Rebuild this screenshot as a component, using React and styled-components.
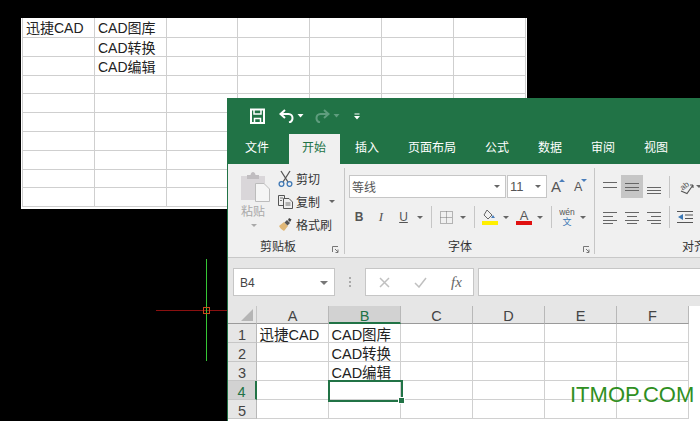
import React from "react";
import styled, { createGlobalStyle } from "styled-components";

const Global = createGlobalStyle`
  html, body { margin: 0; padding: 0; background: #000; }
  body { font-family: "Liberation Sans", "Noto Sans CJK SC", sans-serif; }
`;

const Desktop = styled.div`
  position: relative;
  width: 700px;
  height: 421px;
  background: #000;
  overflow: hidden;
`;

/* ---------- pasted sheet on the CAD canvas ---------- */
const PastedSheet = styled.div`
  position: absolute;
  left: 21px;
  top: 18px;
  width: 506px;
  height: 191px;
  background: #fff;
  box-sizing: border-box;
  padding-left: 1px;
  display: grid;
  grid-template-columns: 73px 72px 71px 72px 72px 72px 72px;
  grid-template-rows: 20px;
  grid-auto-rows: 18.8px;
  align-content: start;
`;
const PastedCell = styled.div`
  box-sizing: border-box;
  border-right: 1px solid #cfcfcf;
  border-bottom: 1px solid #cfcfcf;
  padding-left: 3px;
  font-size: 14px;
  line-height: 21px;
  color: #222;
  white-space: nowrap;
  overflow: hidden;
  &:nth-child(7n + 1) {
    border-left: 1px solid #cfcfcf;
  }
`;

const CrossHair = styled.svg`
  position: absolute;
  left: 150px;
  top: 255px;
`;

/* ---------- excel window ---------- */
const ExcelWindow = styled.div`
  position: absolute;
  left: 227px;
  top: 98px;
  width: 473px;
  height: 323px;
  background: #fff;
  border-left: 1px solid #217346;
  box-sizing: border-box;
  display: flex;
  flex-direction: column;
`;
const TitleBar = styled.div`
  height: 36px;
  flex: none;
  background: #217346;
  display: flex;
  align-items: center;
  padding-left: 22px;
  box-sizing: border-box;
`;
const QuickIcon = styled.svg`
  display: block;
  flex: none;
  margin-right: ${(p) => p.$gap || 0}px;
  margin-left: ${(p) => p.$lead || 0}px;
`;
const TabBar = styled.div`
  height: 30px;
  flex: none;
  background: #217346;
  display: flex;
  gap: 2px;
  white-space: nowrap;
`;
const FileTab = styled.div`
  width: 61px;
  margin-right: -2px;
  padding-left: 17px;
  box-sizing: border-box;
  line-height: 29px;
  font-size: 12px;
  color: #fff;
`;
const Tab = styled.div`
  flex: none;
  width: ${(p) => p.$w || 51}px;
  padding-left: 13px;
  box-sizing: border-box;
  line-height: 29px;
  font-size: 12px;
  color: ${(p) => (p.$active ? "#217346" : "#fff")};
  background: ${(p) => (p.$active ? "#f0f0f0" : "transparent")};
`;

const Ribbon = styled.div`
  height: 94px;
  flex: none;
  background: #f0f0f0;
  border-bottom: 1px solid #c8c8c8;
  box-sizing: border-box;
  display: flex;
  overflow: hidden;
`;
const Group = styled.div`
  position: relative;
  flex: none;
  width: ${(p) => p.$w}px;
  height: 86px;
  margin-top: 4px;
  box-sizing: border-box;
  border-right: ${(p) => (p.$open ? "none" : "1px solid #c6c6c6")};
  display: flex;
  flex-direction: column;
`;
const GroupBody = styled.div`
  flex: 1;
  display: flex;
  padding-left: ${(p) => p.$pl || 0}px;
`;
const GroupLabel = styled.div`
  height: 18px;
  line-height: 22px;
  padding-left: ${(p) => p.$pl}px;
  font-size: 12px;
  color: #333;
  white-space: nowrap;
`;
const Launcher = styled.svg`
  position: absolute;
  right: ${(p) => p.$r}px;
  bottom: 1px;
`;
const PasteButton = styled.div`
  width: 33px;
  margin-left: 13px;
  margin-right: 4px;
  margin-top: 3px;
  display: flex;
  flex-direction: column;
  align-items: flex-start;
  flex: none;
`;
const PasteLabel = styled.div`
  font-size: 12px;
  line-height: 14px;
  color: #a9a9a9;
  margin-top: 3px;
`;
const PasteCaret = styled.div`
  margin-top: 5px;
  margin-left: 10px;
  width: 0;
  height: 0;
  border-left: 3px solid transparent;
  border-right: 3px solid transparent;
  border-top: 3px solid #a9a9a9;
`;
const ClipColumn = styled.div`
  display: flex;
  flex-direction: column;
  gap: 5px;
  padding-top: 1px;
`;
const ClipRow = styled.div`
  display: flex;
  align-items: center;
  gap: 3px;
  height: 18px;
  font-size: 12px;
  color: #333;
  white-space: nowrap;
`;
const Caret = styled.span`
  display: inline-block;
  flex: none;
  width: 0;
  height: 0;
  border-left: 3px solid transparent;
  border-right: 3px solid transparent;
  border-top: 3px solid ${(p) => p.$color || "#666"};
  margin-left: ${(p) => p.$ml || 0}px;
  margin-right: ${(p) => p.$mr || 0}px;
`;
const NameCaret = styled(Caret)`
  border-left-width: 4px;
  border-right-width: 4px;
  border-top-width: 4px;
`;
const FontColumn = styled.div`
  display: flex;
  flex-direction: column;
  padding-top: 7px;
`;
const ToolRow = styled.div`
  display: flex;
  align-items: center;
  height: ${(p) => p.$h}px;
  margin-top: ${(p) => p.$mt || 0}px;
  padding-left: ${(p) => p.$pl || 0}px;
`;
const FontSelect = styled.div`
  box-sizing: border-box;
  width: ${(p) => p.$w}px;
  height: 23px;
  background: #fff;
  border: 1px solid #c6c6c6;
  margin-right: 1px;
  padding: 0 5px 0 2px;
  display: flex;
  align-items: center;
  justify-content: space-between;
  font-size: ${(p) => p.$size || 12}px;
  color: #555;
  flex: none;
`;
const SizeButton = styled.span`
  position: relative;
  flex: none;
  width: 23px;
  margin-left: ${(p) => p.$ml || 0}px;
  font-size: ${(p) => p.$size}px;
  line-height: 24px;
  color: #555;
  &::after {
    content: "";
    position: absolute;
    left: ${(p) => p.$tri}px;
    top: 4px;
    width: 0;
    height: 0;
    border-left: 3px solid transparent;
    border-right: 3px solid transparent;
    ${(p) =>
      p.$down
        ? "border-top: 3px solid #4a7ebb;"
        : "border-bottom: 3px solid #4a7ebb;"}
  }
`;
const GlyphButton = styled.span`
  flex: none;
  width: ${(p) => p.$w}px;
  text-align: center;
  font-family: ${(p) => (p.$serif ? '"Liberation Serif", serif' : "inherit")};
  font-size: ${(p) => p.$size || 12}px;
  font-weight: ${(p) => (p.$bold ? 700 : 400)};
  font-style: ${(p) => (p.$italic ? "italic" : "normal")};
  text-decoration: ${(p) => (p.$under ? "underline" : "none")};
  color: #555;
  line-height: 16px;
`;
const ToolSep = styled.span`
  flex: none;
  width: 1px;
  height: 22px;
  background: #c6c6c6;
  margin-left: ${(p) => p.$ml}px;
  margin-right: ${(p) => p.$mr}px;
`;
const ActiveAlign = styled.div`
  flex: none;
  width: 22px;
  height: 23px;
  margin: 0 4px;
  background: #c6c6c6;
  display: flex;
  align-items: center;
  justify-content: center;
`;
const AlignGap = styled.span`
  flex: none;
  width: 8px;
`;

/* ---------- formula bar ---------- */
const FormulaBar = styled.div`
  height: 48px;
  flex: none;
  background: #e6e6e6;
  box-sizing: border-box;
  padding: 10px 0 10px 5px;
  display: flex;
  align-items: flex-start;
`;
const NameBox = styled.div`
  box-sizing: border-box;
  width: 102px;
  height: 28px;
  background: #fff;
  border: 1px solid #c6c6c6;
  display: flex;
  align-items: center;
  justify-content: space-between;
  padding: 1px 6px 0 6px;
  font-size: 12px;
  color: #444;
`;
const FormulaDots = styled.div`
  width: 30px;
  flex: none;
  height: 28px;
  display: flex;
  align-items: center;
  justify-content: center;
`;
const FormulaButtons = styled.div`
  box-sizing: border-box;
  width: 109px;
  height: 28px;
  background: #fff;
  border: 1px solid #c6c6c6;
  margin-right: 4px;
  flex: none;
  display: flex;
  align-items: center;
  gap: 24px;
  padding-left: 13px;
`;
const FxLabel = styled.span`
  font-family: "Liberation Serif", serif;
  font-style: italic;
  font-size: 15px;
  color: #666;
`;
const FormulaInput = styled.div`
  flex: 1;
  height: 28px;
  box-sizing: border-box;
  background: #fff;
  border: 1px solid #c6c6c6;
  border-right: none;
`;

/* ---------- grid ---------- */
const SheetGrid = styled.div`
  position: relative;
  flex: 1;
  display: grid;
  grid-template-columns: 29px repeat(6, 72px);
  grid-template-rows: 18px repeat(5, 19px);
  align-content: start;
  background: #fff;
  overflow: hidden;
`;
const Corner = styled.div`
  background: #e6e6e6;
  border-right: 1px solid #c6c6c6;
  border-bottom: 1px solid #9a9a9a;
  box-sizing: border-box;
  display: flex;
  align-items: flex-end;
  justify-content: flex-end;
  padding: 0 3px 2px 0;
`;
const ColHead = styled.div`
  box-sizing: border-box;
  background: ${(p) => (p.$active ? "#d2d2d2" : "#e6e6e6")};
  border-right: 1px solid #b8b8b8;
  border-bottom: ${(p) => (p.$active ? "2px solid #217346" : "1px solid #9a9a9a")};
  text-align: center;
  font-size: 14.5px;
  line-height: 21px;
  color: ${(p) => (p.$active ? "#217346" : "#444")};
`;
const RowHead = styled.div`
  box-sizing: border-box;
  background: ${(p) => (p.$active ? "#d2d2d2" : "#e6e6e6")};
  border-right: ${(p) => (p.$active ? "2px solid #217346" : "1px solid #b8b8b8")};
  border-bottom: 1px solid #c6c6c6;
  text-align: center;
  font-size: 14.5px;
  line-height: 23px;
  color: ${(p) => (p.$active ? "#217346" : "#444")};
  overflow: hidden;
`;
const Cell = styled.div`
  box-sizing: border-box;
  border-right: 1px solid #d0d0d0;
  border-bottom: 1px solid #d0d0d0;
  padding-left: 2.5px;
  font-size: 14.5px;
  line-height: 23px;
  color: #222;
  white-space: nowrap;
  overflow: hidden;
`;
const Selection = styled.div`
  position: absolute;
  left: 100px;
  top: 74px;
  width: 75px;
  height: 22px;
  box-sizing: border-box;
  border: 2px solid #217346;
`;
const FillHandle = styled.div`
  position: absolute;
  right: -4px;
  bottom: -4px;
  width: 5px;
  height: 5px;
  background: #217346;
  border: 1px solid #fff;
`;
const Watermark = styled.div`
  position: absolute;
  left: 570px;
  top: 382px;
  font-size: 22px;
  line-height: 26px;
  color: #2f8f22;
  white-space: nowrap;
`;

const pasted = [
  ["迅捷CAD", "CAD图库"],
  ["", "CAD转换"],
  ["", "CAD编辑"],
  ...Array.from({ length: 7 }, () => ["", ""]),
];

const Lines = ({ y, w = 14 }) => (
  <QuickIcon width={w} height="14" viewBox={`0 0 ${w} 14`} stroke="#666" strokeWidth="1">
    {y.map((v, i) => (
      <path key={i} d={`M${v[0]} ${v[1] + 0.5}H${v[2]}`} />
    ))}
  </QuickIcon>
);

const Launch = ({ r }) => (
  <Launcher $r={r} width="7" height="7" viewBox="0 0 7 7" fill="none" stroke="#777">
    <path d="M.5 6V.5H6" />
    <path d="M3 3l3 3M6 3.5V6.5H3.5" />
  </Launcher>
);

export default function App() {
  const gridRows = [
    ["迅捷CAD", "CAD图库"],
    ["", "CAD转换"],
    ["", "CAD编辑"],
    ["", ""],
    ["", ""],
  ];
  return (
    <Desktop>
      <Global />
      <PastedSheet>
        {pasted.map((r, i) =>
          [0, 1, 2, 3, 4, 5, 6].map((c) => (
            <PastedCell key={`${i}-${c}`}>{r[c] || ""}</PastedCell>
          ))
        )}
      </PastedSheet>

      <CrossHair width="80" height="110" viewBox="0 0 80 110" fill="none">
        <path d="M6 55.5H77" stroke="#8a1010" />
        <path d="M56.5 4V106" stroke="#35c635" />
        <rect x="53.5" y="52.5" width="6" height="6" stroke="#c84a1a" />
      </CrossHair>

      <ExcelWindow>
        <TitleBar>
          <QuickIcon $gap={14} width="15" height="16" viewBox="0 0 15 16" fill="none" stroke="#fff" strokeWidth="2">
            <path d="M1 1.5H14V15H1Z" />
            <path d="M4 1.5V6H11V1.5" strokeWidth="1.5" />
            <path d="M4.5 15V10.5H10.5V15" strokeWidth="1.5" />
          </QuickIcon>
          <QuickIcon $gap={3} width="15" height="14" viewBox="0 0 15 14" fill="none" stroke="#fff" strokeWidth="2">
            <path d="M6 1L1.5 5 6 9" />
            <path d="M2 5H9.5C12 5 13.5 7 13.5 9S12 13 10 13.5" />
          </QuickIcon>
          <QuickIcon $gap={11} width="7" height="4" viewBox="0 0 7 4">
            <path d="M.5 0H6.5L3.5 3.5Z" fill="#fff" />
          </QuickIcon>
          <QuickIcon $gap={3} width="15" height="14" viewBox="0 0 15 14" fill="none" stroke="#5f9d7e" strokeWidth="2">
            <path d="M9 1l4.5 4L9 9" />
            <path d="M13 5H5.5C3 5 1.5 7 1.5 9S3 13 5 13.5" />
          </QuickIcon>
          <QuickIcon $gap={14} width="7" height="4" viewBox="0 0 7 4">
            <path d="M.5 0H6.5L3.5 3.5Z" fill="#5f9d7e" />
          </QuickIcon>
          <QuickIcon width="6" height="7" viewBox="0 0 6 7">
            <path d="M.5 .5H5.5V1.5H.5Z M0 3H6L3 6.5Z" fill="#fff" />
          </QuickIcon>
        </TitleBar>

        <TabBar>
          <FileTab>文件</FileTab>
          <Tab $active>开始</Tab>
          <Tab>插入</Tab>
          <Tab $w={75}>页面布局</Tab>
          <Tab>公式</Tab>
          <Tab>数据</Tab>
          <Tab>审阅</Tab>
          <Tab>视图</Tab>
        </TabBar>

        <Ribbon>
          <Group $w={117}>
            <GroupBody>
              <PasteButton>
                <svg width="29" height="31" viewBox="0 0 29 31" fill="none">
                  <path d="M0 5H24V29H0Z" fill="#d9d6d9" />
                  <path d="M6 4H9.5C10 0 14 0 14.5 4H18V8H6Z" fill="#c0bdc0" />
                  <path d="M14.5 12.5H23L28.5 18V30.5H14.5Z" fill="#f5f5f5" stroke="#bcbcbc" />
                </svg>
                <PasteLabel>粘贴</PasteLabel>
                <PasteCaret />
              </PasteButton>
              <ClipColumn>
                <ClipRow>
                  <svg width="15" height="17" viewBox="0 0 15 17" fill="none" stroke="#555" strokeWidth="1.3">
                    <path d="M3 1L10 12M12 1L5 12" />
                    <circle cx="3.5" cy="14" r="2.4" stroke="#3f78b5" />
                    <circle cx="11.5" cy="14" r="2.4" stroke="#3f78b5" />
                  </svg>
                  剪切
                </ClipRow>
                <ClipRow>
                  <svg width="15" height="15" viewBox="0 0 15 15" fill="#f0f0f0" stroke="#555">
                    <path d="M.5 1.5H6.5V11.5H.5Z" />
                    <path d="M5.5 4.5H11L14.5 8V14.5H5.5Z" />
                    <path d="M2 4H5M2 6.5H4M7.5 9H12.5M7.5 11H12.5" strokeWidth=".8" />
                  </svg>
                  复制
                  <Caret $ml={6} />
                </ClipRow>
                <ClipRow>
                  <svg width="15" height="15" viewBox="0 0 15 15" fill="none">
                    <path d="M1 9L6 5L10 9L6 14C4 13 2 11 1 9Z" fill="#e0b878" />
                    <path d="M6.5 5.5L9 3L12 6L9.5 8.5Z" fill="#555" />
                    <path d="M11 1L13.5 2.5L12 5L10 3Z" fill="#444" />
                  </svg>
                  格式刷
                </ClipRow>
              </ClipColumn>
            </GroupBody>
            <GroupLabel $pl={32}>剪贴板</GroupLabel>
            <Launch r={5} />
          </Group>

          <Group $w={250}>
            <GroupBody $pl={4}>
              <FontColumn>
                <ToolRow $h={23}>
                  <FontSelect $w={157}>
                    等线
                    <Caret />
                  </FontSelect>
                  <FontSelect $w={40} $size={13}>
                    11
                    <Caret />
                  </FontSelect>
                  <SizeButton $ml={3} $size={15} $tri={8}>A</SizeButton>
                  <SizeButton $size={12.5} $tri={7} $down>A</SizeButton>
                </ToolRow>
                <ToolRow $h={22} $mt={8} $pl={3}>
                  <GlyphButton $w={14} $bold>B</GlyphButton>
                  <GlyphButton $w={30} $italic $serif $size={13}>I</GlyphButton>
                  <GlyphButton $w={15} $under>U</GlyphButton>
                  <Caret $ml={6} />
                  <ToolSep $ml={8} $mr={8} />
                  <QuickIcon $gap={7} width="13" height="13" viewBox="0 0 13 13" fill="none" stroke="#777" strokeDasharray="1 1">
                    <path d="M.5.5H12.5V12.5H.5ZM.5 6.5H12.5M6.5.5V12.5" />
                  </QuickIcon>
                  <Caret />
                  <ToolSep $ml={8} $mr={7} />
                  <QuickIcon $gap={5} width="16" height="16" viewBox="0 0 16 16" fill="none">
                    <path d="M5 1L10 6L6 10L2 6Z" stroke="#666" />
                    <path d="M11 6L13 9H9Z" fill="#4a7ebb" />
                    <rect x="0" y="12" width="16" height="4" fill="#ffef00" />
                  </QuickIcon>
                  <Caret />
                  <QuickIcon $gap={5} $lead={7} width="16" height="16" viewBox="0 0 16 16">
                    <text x="8" y="11" fontSize="13" textAnchor="middle" fill="#555" fontFamily="Liberation Sans">A</text>
                    <rect x="0" y="12" width="16" height="4" fill="#e01010" />
                  </QuickIcon>
                  <Caret />
                  <ToolSep $ml={8} $mr={7} />
                  <QuickIcon $gap={5} width="16" height="18" viewBox="0 0 16 18">
                    <text x="8" y="7" fontSize="8.5" textAnchor="middle" fill="#555" fontFamily="Liberation Sans">wén</text>
                    <text x="8" y="17" fontSize="9" textAnchor="middle" fill="#3b78b5" fontFamily="Noto Sans CJK SC">文</text>
                  </QuickIcon>
                  <Caret />
                </ToolRow>
              </FontColumn>
            </GroupBody>
            <GroupLabel $pl={103}>字体</GroupLabel>
            <Launch r={4} />
          </Group>

          <Group $w={110} $open>
            <GroupBody $pl={8}>
              <FontColumn>
                <ToolRow $h={23}>
                  <Lines w={14} y={[[0, 2, 14], [0, 7, 14]]} />
                  <ActiveAlign>
                    <Lines w={14} y={[[0, 3, 14], [0, 7, 14], [0, 10, 14]]} />
                  </ActiveAlign>
                  <Lines w={14} y={[[0, 7, 14], [0, 10, 14], [0, 13, 14]]} />
                  <ToolSep $ml={8} $mr={8} />
                  <QuickIcon $gap={2} width="16" height="16" viewBox="0 0 16 16" fill="none" stroke="#555" strokeWidth="1.1">
                    <text x="2" y="10" fontSize="8" fill="#555" stroke="none" fontFamily="Liberation Sans" transform="rotate(-40 6 7)">ab</text>
                    <path d="M3 12L9 14.5L15 6M15 6H12M15 6V9" />
                  </QuickIcon>
                  <Caret />
                </ToolRow>
                <ToolRow $h={22} $mt={8}>
                  <Lines w={14} y={[[0, 2, 14], [0, 6, 10], [0, 10, 14], [0, 13, 10]]} />
                  <AlignGap />
                  <Lines w={14} y={[[0, 2, 14], [2, 6, 12], [0, 10, 14], [2, 13, 12]]} />
                  <AlignGap />
                  <Lines w={14} y={[[0, 2, 14], [4, 6, 14], [0, 10, 14], [4, 13, 14]]} />
                  <ToolSep $ml={8} $mr={7} />
                  <QuickIcon width="16" height="14" viewBox="0 0 16 14" fill="none" stroke="#555">
                    <path d="M0 1.5H16M8 5H16M8 8.5H16M0 12.5H16" />
                    <path d="M6 4L1 7L6 10Z" fill="#3b78b5" stroke="none" />
                  </QuickIcon>
                </ToolRow>
              </FontColumn>
            </GroupBody>
            <GroupLabel $pl={87}>对齐</GroupLabel>
          </Group>
        </Ribbon>

        <FormulaBar>
          <NameBox>
            B4
            <NameCaret $color="#777" />
          </NameBox>
          <FormulaDots>
            <svg width="2" height="10" viewBox="0 0 2 10" fill="#aaa">
              <rect width="2" height="2" />
              <rect y="4" width="2" height="2" />
              <rect y="8" width="2" height="2" />
            </svg>
          </FormulaDots>
          <FormulaButtons>
            <svg width="11" height="11" viewBox="0 0 11 11" stroke="#c0c0c0" strokeWidth="1.5">
              <path d="M1 1L10 10M10 1L1 10" />
            </svg>
            <svg width="13" height="11" viewBox="0 0 13 11" fill="none" stroke="#c0c0c0" strokeWidth="1.5">
              <path d="M1 6L5 10L12 1" />
            </svg>
            <FxLabel>fx</FxLabel>
          </FormulaButtons>
          <FormulaInput />
        </FormulaBar>

        <SheetGrid>
          <Corner>
            <svg width="12" height="12" viewBox="0 0 12 12">
              <path d="M12 0V12H0Z" fill="#b5b5b5" />
            </svg>
          </Corner>
          {["A", "B", "C", "D", "E", "F"].map((c) => (
            <ColHead key={c} $active={c === "B"}>{c}</ColHead>
          ))}
          {gridRows.map((r, i) => (
            <React.Fragment key={i}>
              <RowHead $active={i === 3}>{i + 1}</RowHead>
              {[0, 1, 2, 3, 4, 5].map((c) => (
                <Cell key={c}>{r[c] || ""}</Cell>
              ))}
            </React.Fragment>
          ))}
          <Selection>
            <FillHandle />
          </Selection>
        </SheetGrid>
      </ExcelWindow>

      <Watermark>ITMOP.COM</Watermark>
    </Desktop>
  );
}
